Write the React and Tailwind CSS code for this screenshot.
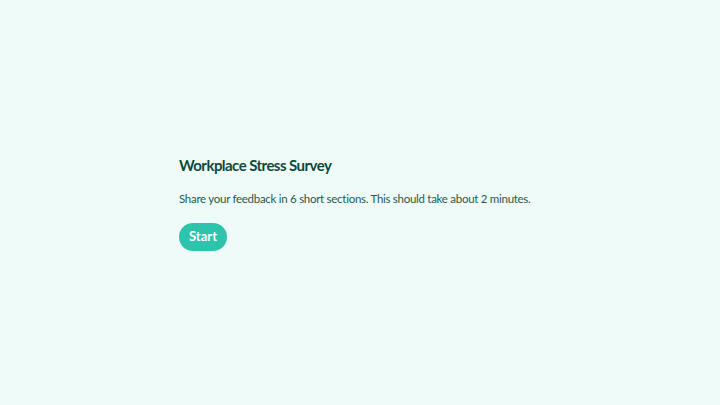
export default function App() {
  return (
    <div
      className="w-full min-h-screen bg-[#effbf8] flex items-center justify-center"
      style={{ fontFamily: 'Lato, "Noto Sans", sans-serif' }}
    >
      <div className="w-[362px] flex flex-col items-start">
        <h1 className="text-[15px] font-bold text-[#0e4a3c] leading-[20px] tracking-[-0.55px]">
          Workplace Stress Survey
        </h1>
        <p className="mt-[16px] text-[11.5px] text-[#285a4e] leading-[16px] tracking-[-0.28px] whitespace-nowrap">
          Share your feedback in 6 short sections. This should take about 2 minutes.
        </p>
        <button className="mt-[16px] h-[28px] w-[48px] rounded-full bg-[#2ec4ac] text-white text-[13px] font-bold">
          Start
        </button>
      </div>
    </div>
  );
}
